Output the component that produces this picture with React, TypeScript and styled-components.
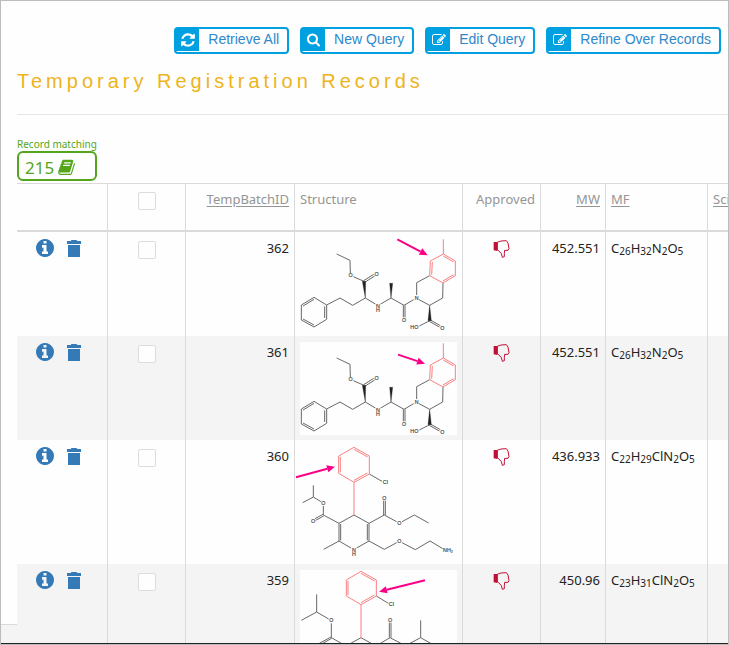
import React from "react";
import styled, { createGlobalStyle } from "styled-components";

const GlobalStyle = createGlobalStyle`
  *, *::before, *::after { box-sizing: border-box; }
  body {
    margin: 0;
    background: #fefefe;
    font-family: "Noto Sans", "Open Sans", sans-serif;
    font-size: 13px;
    line-height: 20px;
    color: #222;
  }
`;

const Frame = styled.div`
  height: 100vh;
  display: flex;
  flex-direction: column;
  overflow: hidden;
  border: 1px solid #bcbcbc;
`;

const Viewport = styled.div`
  flex: 1;
  min-height: 0;
  display: flex;
  flex-direction: column;
  overflow: hidden;
  padding-bottom: 18px;
  background: #f4f4f4;
  border-bottom: 1px solid #222;
`;

const Panel = styled.main`
  flex: 1;
  min-height: 0;
  padding: 26px 0 0 16px;
  background: #fefefe;
  border-bottom: 1px solid #d9d9d9;
`;

const Toolbar = styled.nav`
  display: flex;
  justify-content: flex-end;
  gap: 11px;
  padding-right: 7px;
`;

const ToolButton = styled.button`
  display: flex;
  height: 27px;
  padding: 0 0 1px;
  border: 2px solid #00a0e1;
  border-radius: 4px;
  background: #fefefe;
  color: #2e88cc;
  font: 14px/20px "Liberation Sans", Arial, sans-serif;
  white-space: nowrap;
  cursor: pointer;
`;

const ToolIcon = styled.span`
  display: flex;
  align-items: center;
  justify-content: center;
  width: 23px;
  height: 22px;
  background: #00a0e1;
  color: #fff;
`;

const ToolLabel = styled.span`
  padding: 0 8px 0 9px;
`;

const Title = styled.h1`
  margin: 14px 0 0;
  font: 400 20px/26px "Liberation Sans", Arial, sans-serif;
  letter-spacing: 4px;
  white-space: nowrap;
  color: #edb41c;
`;

const Rule = styled.hr`
  height: 1px;
  margin: 20px 0 0;
  border: 0;
  background: #e6e6e6;
`;

const Matching = styled.section`
  display: inline-flex;
  flex-direction: column;
  margin-top: 22px;
  color: #55a51c;
`;

const MatchLabel = styled.span`
  font-size: 10px;
  line-height: 14px;
`;

const MatchBox = styled.div`
  display: flex;
  align-items: center;
  gap: 4px;
  height: 30px;
  padding: 4px 6px 0;
  border: 2px solid #55a51c;
  border-radius: 6px;
  font-size: 17px;
`;

const Grid = styled.table`
  width: max(100%, 806px);
  margin-top: 2px;
  table-layout: fixed;
  border-collapse: separate;
  border-spacing: 0;
  background: #fefefe;
`;

const Col = styled.col<{ $w?: number }>`
  ${(p) => (p.$w ? `width: ${p.$w}px;` : "")}
`;

type Align = "left" | "right" | "center";

const HeadCell = styled.th<{ $align?: Align }>`
  height: 49px;
  padding: 5px 5px 0;
  border-top: 1px solid #dadada;
  border-bottom: 2px solid #dadada;
  border-left: 1px solid #dadada;
  font-weight: 400;
  text-align: ${(p) => p.$align ?? "left"};
  vertical-align: top;
  color: #959595;
  &:first-child { border-left: 0; }
`;

const SortLink = styled.a`
  color: inherit;
  text-decoration: underline;
  text-underline-offset: 2px;
`;

const Row = styled.tr`
  &:nth-child(even) { background: #f4f4f4; }
`;

const Cell = styled.td<{ $align?: Align }>`
  padding: 6px 5px 5px;
  border-left: 1px solid #dadada;
  text-align: ${(p) => p.$align ?? "left"};
  vertical-align: top;
  white-space: nowrap;
  &:first-child { border-left: 0; }
`;

const Actions = styled.div`
  display: flex;
  align-items: center;
  gap: 13px;
  padding: 1px 0 0 14px;
`;

const IconButton = styled.button`
  display: flex;
  padding: 0;
  border: 0;
  background: none;
  color: #337ab7;
  cursor: pointer;
`;

const Tick = styled.input`
  appearance: none;
  display: block;
  width: 18px;
  height: 18px;
  margin: 3px auto 0;
  border: 1px solid #dcdcdc;
  border-radius: 2px;
  background: #fefefe;
  &:checked { background: #337ab7; }
`;

const Sub = styled.sub`
  font-size: 10px;
  line-height: 0;
  vertical-align: -2px;
`;

const ThumbWrap = styled.div`
  display: flex;
  justify-content: center;
  padding-top: 2px;
`;

const Drawing = styled.svg`
  display: block;
  overflow: visible;
  background: #fefefe;
  font-family: "Liberation Sans", Arial, sans-serif;
  font-size: 16px;
`;

/* ---------- icons ---------- */

const RefreshIcon = () => (
  <svg width="14" height="16" viewBox="0 0 1536 1792" fill="currentColor" aria-hidden="true">
    <path d="M1511 1056q0 5-1 7-64 268-268 434.500t-478 166.500q-146 0-282.500-55t-243.500-157l-129 129q-19 19-45 19t-45-19-19-45v-448q0-26 19-45t45-19h448q26 0 45 19t19 45-19 45l-137 137q71 66 161 102t187 36q134 0 250-65t186-179q11-17 53-117 8-23 30-23h192q13 0 22.500 9.500t9.500 22.500zm25-800v448q0 26-19 45t-45 19h-448q-26 0-45-19t-19-45 19-45l138-138q-148-137-349-137-134 0-250 65t-186 179q-11 17-53 117-8 23-30 23h-199q-13 0-22.500-9.500t-9.500-22.500v-7q65-268 270-434.500t480-166.500q146 0 284 55.500t245 156.500l130-129q19-19 45-19t45 19 19 45z" />
  </svg>
);

const SearchIcon = () => (
  <svg width="13" height="14" viewBox="0 64 1664 1792" fill="currentColor" aria-hidden="true">
    <path d="M1152 832q0-185-131.500-316.500t-316.500-131.500-316.500 131.500-131.500 316.500 131.500 316.500 316.500 131.500 316.500-131.500 131.500-316.500zm512 832q0 52-38 90t-90 38q-54 0-90-38l-343-342q-179 124-399 124-143 0-273.500-55.500t-225-150-150-225-55.500-273.500 55.500-273.500 150-225 225-150 273.500-55.500 273.500 55.500 225 150 150 225 55.500 273.500q0 220-124 399l343 343q37 37 37 90z" />
  </svg>
);

const EditIcon = () => (
  <svg width="14" height="14" viewBox="0 0 1792 1792" fill="currentColor" aria-hidden="true">
    <path d="M888 1184l116-116-152-152-116 116v56h96v96h56zm440-720q-16-16-33 1l-350 350q-17 17-1 33t33-1l350-350q17-17 1-33zm80 594v190q0 119-84.500 203.500t-203.500 84.500h-832q-119 0-203.500-84.500t-84.500-203.500v-832q0-119 84.500-203.500t203.500-84.500h832q63 0 117 25 15 7 18 23 3 17-9 29l-49 49q-14 14-32 8-23-6-45-6h-832q-66 0-113 47t-47 113v832q0 66 47 113t113 47h832q66 0 113-47t47-113v-126q0-13 9-22l64-64q15-15 35-7t20 29zm-96-738l288 288-672 672h-288v-288zm444 132l-92 92-288-288 92-92q28-28 68-28t68 28l152 152q28 28 28 68t-28 68z" />
  </svg>
);

const BookIcon = () => (
  <svg width="17" height="18" viewBox="0 64 1664 1792" fill="currentColor" aria-hidden="true">
    <path d="M1639 478q40 57 18 129l-275 906q-19 64-76.500 107.500t-122.500 43.500h-923q-77 0-148.500-53.500t-99.500-131.500q-24-67-2-127 0-4 3-27t4-37q1-8-3-21.500t-3-19.500q2-11 8-21t16.500-23.500 16.500-23.500q23-38 45-91.500t30-91.500q3-10 .5-30t-.5-28q3-11 17-28t17-23q21-36 42-92t25-90q1-9-2.500-32t.5-28q4-13 22-30.500t22-22.500q19-26 42.500-84.500t27.500-96.500q1-8-3-25.500t-2-26.500q2-8 9-18t18-23 17-21q8-12 16.500-30.500t15-35 16-36 19.500-32 26.500-23.500 36-11.500 47.500 5.500l-1 3q38-9 51-9h761q74 0 114 56t18 130l-274 906q-36 119-71.500 153.500t-128.500 34.500h-869q-27 0-38 15-11 16-1 43 24 70 144 70h923q29 0 56-15.500t35-41.500l300-987q7-22 5-57 38 15 59 43zm-1064 2q-4 13 2 22.500t20 9.500h608q13 0 25.500-9.500t16.500-22.500l21-64q4-13-2-22.500t-20-9.500h-608q-13 0-25.500 9.500t-16.500 22.500zm-83 256q-4 13 2 22.500t20 9.500h608q13 0 25.500-9.500t16.500-22.500l21-64q4-13-2-22.500t-20-9.500h-608q-13 0-25.500 9.500t-16.500 22.500z" />
  </svg>
);

const InfoIcon = () => (
  <svg width="18" height="18" viewBox="128 128 1536 1536" fill="currentColor" aria-hidden="true">
    <path d="M1152 1376v-160q0-14-9-23t-23-9h-96v-512q0-14-9-23t-23-9h-320q-14 0-23 9t-9 23v160q0 14 9 23t23 9h96v320h-96q-14 0-23 9t-9 23v160q0 14 9 23t23 9h448q14 0 23-9t9-23zm-128-896v-160q0-14-9-23t-23-9h-192q-14 0-23 9t-9 23v160q0 14 9 23t23 9h192q14 0 23-9t9-23zm640 416q0 209-103 385.500t-279.500 279.500-385.500 103-385.500-103-279.500-279.500-103-385.500 103-385.500 279.500-279.500 385.500-103 385.500 103 279.500 279.500 103 385.500z" />
  </svg>
);

const TrashIcon = () => (
  <svg width="14" height="17" viewBox="0 0 14 17" fill="currentColor" aria-hidden="true">
    <path d="M4.500 0h5l.8 1H14v3H0V1h3.700zM1 5h12v12H1z" />
  </svg>
);

const ThumbDownIcon = () => (
  <svg width="17" height="19" viewBox="100 181 51 57" role="img" aria-label="Not approved">
    <path d="M102 187h11v27l-11-2z" fill="#c01035" />
    <path
      d="M113 188l11-4 16-1 5 7 3 17-3 5h-10l-1 10v9l-6 2-3-11-8-9-4-2z"
      fill="none"
      stroke="#c01035"
      strokeWidth="3"
      strokeLinejoin="round"
    />
  </svg>
);

/* ---------- molecule drawings ---------- */

type Molecule = {
  box: string;
  height: number;
  name: string;
  bonds: string;
  ring: string;
  wedges?: string;
  atoms: [number, number, string][];
};

const quinapril: Molecule = {
  box: "30 174 471 279",
  height: 93,
  name: "Tetrahydroisoquinoline ester",
  bonds:
    "M72 352L110 375V418L72 441L34 420V375ZM72 358L39 378M104 379V414M72 435L39 417" +
    "M110 375L150 354L188 376L226 354M222 304L190 290M181 279L180 241L140 222" +
    "M221 302L251 283M224 307L254 288M226 354L256 372M272 372L303 354L342 376L371 359" +
    "M340 376V412M345 376V412M380 345V308L419 287M387 359L419 376L458 354L459 309" +
    "M419 422L388 438M418 424L448 441M421 420L451 437",
  ring:
    "M419 287L421 243L460 222L496 243V287L459 309ZM460 222V178M425 284L427 246M460 228L491 246M491 284L459 303",
  wedges: "M226 354L217 304H227ZM303 354L299 310H308ZM419 376L414 422H424Z",
  atoms: [
    [182, 287, "O"], [260, 282, "O"], [264, 378, "N"], [264, 391, "H"], [342, 421, "O"],
    [380, 354, "N"], [373, 443, "HO"], [457, 444, "O"],
  ],
};

const amlodipine: Molecule = {
  box: "30 24 471 339",
  height: 113,
  name: "Dihydropyridine aminoethyl ether",
  bonds:
    "M238 108L276 130M192 231L237 256V309L200 330M183 330L147 309V256L192 231M152 258V307M232 258V307" +
    "M147 309L101 334M147 256L100 231V204M99 229L75 242M101 234L77 247M93 191L70 177V142M70 177L38 194" +
    "M237 256L283 231L320 251M281 231V188M286 231V188M336 251L373 231L416 255" +
    "M237 309L283 334L320 314M336 314L376 335L420 309L458 332",
  ring:
    "M192 28L238 54V108L192 133L146 106V54ZM192 133V231M192 34L233 57M232 105L192 127M151 103V57",
  atoms: [
    [286, 134, "Cl"], [100, 196, "O"], [69, 249, "O"], [283, 180, "O"], [328, 256, "O"],
    [328, 309, "O"], [192, 337, "N"], [192, 350, "H"], [474, 338, "NH₂"],
  ],
};

const isopropyl: Molecule = {
  box: "30 30 471 339",
  height: 113,
  name: "Dihydropyridine diisopropyl ester",
  bonds:
    "M259 108L295 130M213 233L258 258V311L213 336L168 311V258L213 233M173 260V309M253 260V309" +
    "M168 258L124 233V190M123 231L88 250M125 235L91 254M116 177L80 156V103M80 156L34 181" +
    "M258 258L300 233L338 253M298 233V188M303 233V188M354 253L392 233V181M392 233L436 258",
  ring:
    "M213 34L259 60V108L213 134L169 108V60ZM213 134V233M213 40L254 63M253 105L213 128M174 105V63",
  atoms: [[304, 134, "Cl"], [124, 181, "O"], [300, 181, "O"]],
};

type Arrow = [number, number, number, number];

const Structure = ({ molecule, arrow }: { molecule: Molecule; arrow: Arrow }) => {
  const [x1, y1, x2, y2] = arrow;
  const length = Math.hypot(x2 - x1, y2 - y1);
  const ux = (x2 - x1) / length;
  const uy = (y2 - y1) / length;
  const bx = x2 - ux * 24;
  const by = y2 - uy * 24;
  const head = `${x2},${y2} ${bx - uy * 11},${by + ux * 11} ${bx + uy * 11},${by - ux * 11}`;
  return (
    <Drawing width="157" height={molecule.height} viewBox={molecule.box} role="img" aria-label={molecule.name}>
      <path d={molecule.bonds} fill="none" stroke="#686868" strokeWidth="3" />
      <path d={molecule.ring} fill="none" stroke="#f98080" strokeWidth="3" />
      {molecule.wedges && <path d={molecule.wedges} fill="#222" stroke="#222" />}
      {molecule.atoms.map(([x, y, label]) => (
        <text key={`${x}-${y}`} x={x} y={y + 5} textAnchor="middle" fill="#333" stroke="#333" strokeWidth="0.400">
          {label}
        </text>
      ))}
      <line x1={x1} y1={y1} x2={bx} y2={by} stroke="#fb0086" strokeWidth="6" />
      <polygon points={head} fill="#fb0086" />
    </Drawing>
  );
};

/* ---------- data ---------- */

const tools = [
  { label: "Retrieve All", Icon: RefreshIcon },
  { label: "New Query", Icon: SearchIcon },
  { label: "Edit Query", Icon: EditIcon },
  { label: "Refine Over Records", Icon: EditIcon },
];

const records: { id: number; mw: string; mf: string; molecule: Molecule; arrow: Arrow }[] = [
  { id: 362, mw: "452.551", mf: "C26H32N2O5", molecule: quinapril, arrow: [322, 178, 413, 226] },
  { id: 361, mw: "452.551", mf: "C26H32N2O5", molecule: quinapril, arrow: [324, 212, 405, 239] },
  { id: 360, mw: "436.933", mf: "C22H29ClN2O5", molecule: amlodipine, arrow: [18, 118, 135, 86] },
  { id: 359, mw: "450.96", mf: "C23H31ClN2O5", molecule: isopropyl, arrow: [405, 61, 267, 95] },
];

const Formula = ({ value }: { value: string }) => (
  <>
    {value.split(/(\d+)/).map((part, i) => (i % 2 ? <Sub key={i}>{part}</Sub> : part))}
  </>
);

export default function App() {
  return (
    <>
      <GlobalStyle />
      <Frame>
        <Viewport>
          <Panel>
            <Toolbar>
              {tools.map(({ label, Icon }) => (
                <ToolButton key={label} type="button">
                  <ToolIcon><Icon /></ToolIcon>
                  <ToolLabel>{label}</ToolLabel>
                </ToolButton>
              ))}
            </Toolbar>
            <Title>Temporary Registration Records</Title>
            <Rule />
            <Matching>
              <MatchLabel>Record matching</MatchLabel>
              <MatchBox>
                <span>215</span>
                <BookIcon />
              </MatchBox>
            </Matching>
            <Grid>
              <colgroup>
                <Col $w={90} />
                <Col $w={78} />
                <Col $w={109} />
                <Col $w={168} />
                <Col $w={78} />
                <Col $w={65} />
                <Col $w={102} />
                <Col />
              </colgroup>
              <thead>
                <tr>
                  <HeadCell aria-label="Actions" />
                  <HeadCell><Tick type="checkbox" aria-label="Select all records" /></HeadCell>
                  <HeadCell $align="right"><SortLink href="#id">TempBatchID</SortLink></HeadCell>
                  <HeadCell>Structure</HeadCell>
                  <HeadCell $align="right">Approved</HeadCell>
                  <HeadCell $align="right"><SortLink href="#mw">MW</SortLink></HeadCell>
                  <HeadCell><SortLink href="#mf">MF</SortLink></HeadCell>
                  <HeadCell><SortLink href="#scientist">Scientist</SortLink></HeadCell>
                </tr>
              </thead>
              <tbody>
                {records.map((r) => (
                  <Row key={r.id}>
                    <Cell>
                      <Actions>
                        <IconButton type="button" aria-label={`Details of ${r.id}`}><InfoIcon /></IconButton>
                        <IconButton type="button" aria-label={`Delete ${r.id}`}><TrashIcon /></IconButton>
                      </Actions>
                    </Cell>
                    <Cell><Tick type="checkbox" aria-label={`Select ${r.id}`} /></Cell>
                    <Cell $align="right">{r.id}</Cell>
                    <Cell><Structure molecule={r.molecule} arrow={r.arrow} /></Cell>
                    <Cell><ThumbWrap><ThumbDownIcon /></ThumbWrap></Cell>
                    <Cell $align="right">{r.mw}</Cell>
                    <Cell><Formula value={r.mf} /></Cell>
                    <Cell />
                  </Row>
                ))}
              </tbody>
            </Grid>
          </Panel>
        </Viewport>
      </Frame>
    </>
  );
}
